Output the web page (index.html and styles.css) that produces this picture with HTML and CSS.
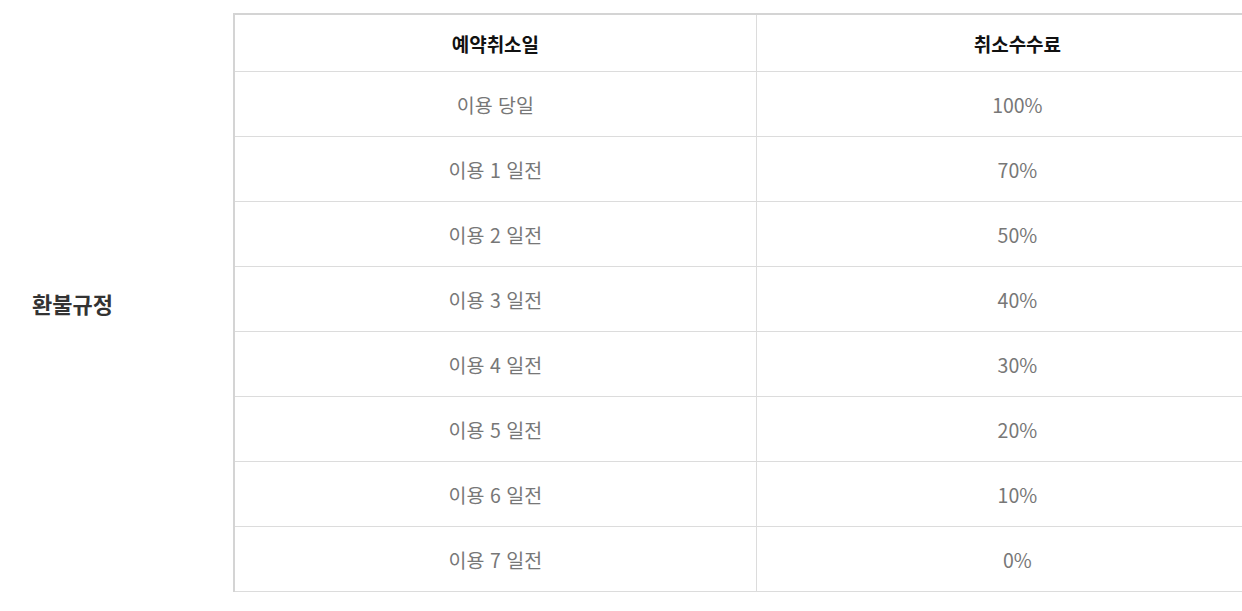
FILE: index.html
```html
<!DOCTYPE html>
<html lang="ko">
<head>
<meta charset="utf-8">
<link rel="stylesheet" href="styles.css">
</head>
<body>
<div class="policy">
  <div class="policy-label">환불규정</div>
  <div class="policy-body">
    <table class="fee-table">
      <thead>
        <tr><th>예약취소일</th><th>취소수수료</th></tr>
      </thead>
      <tbody>
        <tr><td>이용 당일</td><td>100%</td></tr>
        <tr><td>이용 1 일전</td><td>70%</td></tr>
        <tr><td>이용 2 일전</td><td>50%</td></tr>
        <tr><td>이용 3 일전</td><td>40%</td></tr>
        <tr><td>이용 4 일전</td><td>30%</td></tr>
        <tr><td>이용 5 일전</td><td>20%</td></tr>
        <tr><td>이용 6 일전</td><td>10%</td></tr>
        <tr><td>이용 7 일전</td><td>0%</td></tr>
      </tbody>
    </table>
  </div>
</div>
</body>
</html>
```
FILE: styles.css
```css
html, body {
  margin: 0;
  padding: 0;
  background: #fff;
  overflow: hidden;
}
body {
  font-family: "Noto Sans CJK KR", "Noto Sans", sans-serif;
}
.policy {
  display: flex;
  align-items: stretch;
  padding-top: 13px;
  width: 1300px;
}
.policy-label {
  width: 233px;
  flex: none;
  display: flex;
  align-items: center;
  padding-left: 32px;
  box-sizing: border-box;
  font-size: 22px;
  font-weight: 700;
  color: #333;
}
.policy-body {
  flex: none;
  width: 1046px;
}
.fee-table {
  width: 100%;
  border-collapse: collapse;
  table-layout: fixed;
  border-top: 2px solid #d4d4d4;
  border-left: 2px solid #d4d4d4;
}
.fee-table th,
.fee-table td {
  border-bottom: 1px solid #dcdcdc;
  border-right: 1px solid #dcdcdc;
  text-align: center;
  padding: 0;
}
.fee-table th {
  height: 56px;
  font-size: 19px;
  font-weight: 700;
  color: #111;
}
.fee-table td {
  height: 64px;
  font-size: 19.5px;
  color: #777;
}
```
